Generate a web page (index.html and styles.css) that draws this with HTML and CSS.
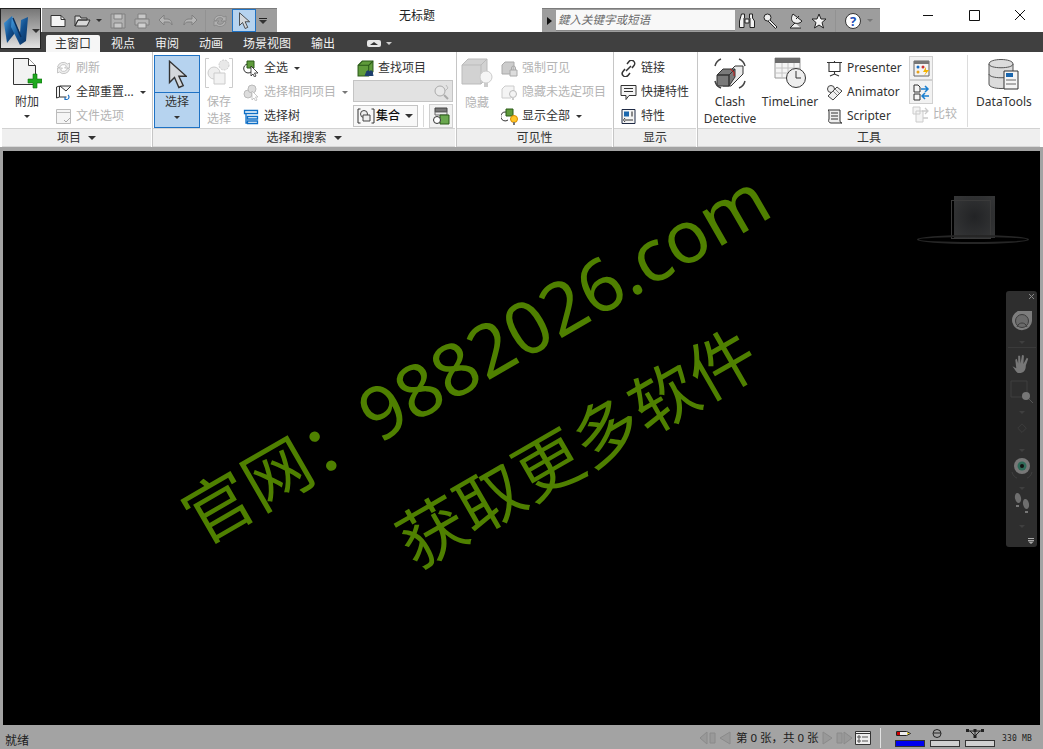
FILE: index.html
```html
<!DOCTYPE html>
<html lang="zh-CN">

<head>
	<meta charset="UTF-8">
	<title>无标题</title>
	<link rel="stylesheet" href="styles.css">
</head>

<body>
	<svg class="defs" width="0" height="0">
		<defs>
			<linearGradient id="logo" x1="0" y1="0" x2="1" y2="1"><stop offset="0" stop-color="#4aa3e6"/><stop offset=".55" stop-color="#12508f"/><stop offset="1" stop-color="#0a2f5c"/></linearGradient>
		</defs>
		<symbol id="cursor" viewBox="0 0 16 24"><path d="M2 1v17l4-4 3.500 8 3.500-1.500-3.500-7.500h6z" fill="#d4d8dc" stroke="#333" stroke-width="1.100"/></symbol>
		<symbol id="cube" viewBox="0 0 16 16"><path d="M1 5l4-4h10v10l-4 4H1z" fill="#5f9b3b" stroke="#2a5a18"/><path d="M1 5h10v10M11 5l4-4" fill="none" stroke="#2a5a18"/></symbol>
	</svg>

	<header class="titlebar">
		<div class="appbtn">
			<svg width="28" height="31" viewBox="0 0 28 31"><path d="M1 8l8-7 3 17-8 10z" fill="url(#logo)"/><path d="M9 1l8 17 1-13 7-3-2 24-6 4-9-18z" fill="url(#logo)"/><path d="M10 3l8 19" stroke="#0a2f5c" stroke-width="1.500"/></svg>
			<i class="caret dark"></i>
		</div>
		<div class="qat">
			<svg class="q" width="16" height="16" viewBox="0 0 16 16"><path d="M1 2.500h10l4 4v7H1z" fill="#f4f4f4" stroke="#333"/><path d="M11 2.500v4h4" fill="none" stroke="#333"/></svg>
			<svg class="q open" width="17" height="16" viewBox="0 0 17 16"><path d="M1 3h5l1 2h6v2H4l-3 6zM1 13l3-6h12l-3 6z" fill="#d8d8d8" stroke="#333"/></svg>
			<i class="caret dark sm"></i>
			<svg class="q" width="16" height="16" viewBox="0 0 16 16"><path d="M1 1h14v14H1z" fill="#b0b0b0" stroke="#808080"/><path d="M4 1h8v5H4zM4 10h8v5H4z" fill="#c8c8c8" stroke="#808080"/></svg>
			<svg class="q" width="16" height="16" viewBox="0 0 16 16"><path d="M4 1h8v5H4z" fill="#c8c8c8" stroke="#808080"/><path d="M1 6h14v6H1z" fill="#b5b5b5" stroke="#808080"/><path d="M4 10h8v5H4z" fill="#d0d0d0" stroke="#808080"/></svg>
			<svg class="q" width="16" height="14" viewBox="0 0 16 14"><path d="M6 1L1 6l5 5V8h4c2 0 3 1 4 3 0-4-2-6-5-6H6z" fill="#b5b5b5" stroke="#808080"/></svg>
			<svg width="16" height="14" viewBox="0 0 16 14"><path d="M10 1l5 5-5 5V8H6c-2 0-3 1-4 3 0-4 2-6 5-6h3z" fill="#b5b5b5" stroke="#808080"/></svg>
			<i class="qsep"></i>
			<svg class="sync" width="16" height="16" viewBox="0 0 16 16"><path d="M2 7a6 6 0 0 1 10-3l2-1v5H9l2-2a4 4 0 0 0-7 2zM14 9a6 6 0 0 1-10 3l-2 1V8h5l-2 2a4 4 0 0 0 7-2z" fill="#b0b0b0" stroke="#858585" stroke-width=".8"/></svg>
			<div class="qcursor"><svg width="12" height="18"><use href="#cursor"/></svg></div>
			<div class="qmore"><i></i><i class="caret dark"></i></div>
		</div>
		<div class="doctitle">无标题</div>
		<div class="searchstrip">
			<div class="searchtoggle"><i class="arrowright"></i></div>
			<div class="searchinput">鍵入关键字或短语</div>
			<svg class="s" width="16" height="16" viewBox="0 0 16 16"><path d="M2.500 1h3v4h-.5v9.500H.5V8zM10.500 1h3v4l2 3v6.500H11V5h-.5zM6 6h4v4H6z" fill="#f2f2f2" stroke="#222"/></svg>
			<svg class="s" width="16" height="16" viewBox="0 0 16 16"><circle cx="4.500" cy="4.500" r="3.500" fill="#eee" stroke="#222"/><path d="M7 7l7 7-1.500 1.500L5 8" fill="#eee" stroke="#222"/></svg>
			<svg class="s" width="16" height="16" viewBox="0 0 16 16"><path d="M6 1l9 7c-2 3-7 3-9 1s-2-5 0-8zM8 10l-5 5h11M9 6l3-3" fill="#eee" stroke="#222"/></svg>
			<svg class="s last" width="16" height="16" viewBox="0 0 16 16"><path d="M8 1l2 5h5l-4 3.500 1.500 5.500L8 12l-4.500 3L5 9.500 1 6h5z" fill="#f4f4f4" stroke="#222"/></svg>
			<i class="qsep"></i>
			<div class="helpicon">?</div>
			<i class="caret grey sm"></i>
		</div>
		<div class="winctl">
			<svg width="46" height="32"><path d="M18 15.500h10" stroke="#111"/></svg>
			<svg width="46" height="32"><path d="M18.500 10.500h10v10h-10z" fill="none" stroke="#111"/></svg>
			<svg width="46" height="32"><path d="M18 10l10 10M28 10L18 20" stroke="#111"/></svg>
		</div>
	</header>

	<nav class="tabs">
		<span class="tab active">主窗口</span>
		<span class="tab">视点</span>
		<span class="tab">审阅</span>
		<span class="tab">动画</span>
		<span class="tab">场景视图</span>
		<span class="tab">输出</span>
		<span class="tabmin"><i class="pill"></i><i class="caret light sm"></i></span>
	</nav>

	<section class="ribbon">
		<div class="panel p-project">
			<div class="panel-body">
				<div class="big add">
					<svg width="30" height="32" viewBox="0 0 30 32"><path d="M1.500 1.500h15l7 7v19h-22z" fill="#f2f2f2" stroke="#333"/><path d="M16.500 1.500v7h7" fill="#fff" stroke="#333"/><path d="M21 17h4v5h5v4h-5v5h-4v-5h-5v-4h5z" fill="#1ea81e" stroke="#0c6b0c" stroke-width=".6"/></svg>
					<span class="lbl">附加</span>
					<i class="caret dark sm"></i>
				</div>
				<div class="col c-proj">
					<div class="row off"><svg width="17" height="16" viewBox="0 0 16 16"><path d="M2 7a6 6 0 0 1 10-3l2-1v5H9l2-2a4 4 0 0 0-7 2zM14 9a6 6 0 0 1-10 3l-2 1V8h5l-2 2a4 4 0 0 0 7-2z" fill="#eee" stroke="#bbb" stroke-width=".8"/></svg><span>刷新</span></div>
					<div class="row"><svg width="17" height="17" viewBox="0 0 17 17"><path d="M1.500 3l3-1v11l-3 1zM5 2h11l-5 5zM4.500 13h7" fill="#f3f3f3" stroke="#333"/><path d="M13 11a2.500 2.500 0 0 1-3 4M10 13v2.500h2.500" fill="none" stroke="#1a6fc4" stroke-width="1.200"/></svg><span>全部重置...</span><i class="caret dark sm"></i></div>
					<div class="row off"><svg width="17" height="17" viewBox="0 0 17 17"><path d="M1.500 1.500h14v14h-14z" fill="#f5f5f5" stroke="#bbb"/><path d="M1.500 4.500h14" stroke="#bbb"/><path d="M9 12l2 2 4-4" fill="none" stroke="#aaa"/></svg><span>文件选项</span></div>
				</div>
			</div>
			<div class="panel-label">项目 <i class="caret dark"></i></div>
		</div>

		<div class="panel p-select">
			<div class="panel-body">
				<div class="selectbtn">
					<div class="selecttop"><svg width="20" height="30"><use href="#cursor"/></svg></div>
					<div class="selectbot"><span class="lbl">选择</span><i class="caret dark sm"></i></div>
				</div>
				<div class="big off savesel">
					<svg width="30" height="32" viewBox="0 0 30 32"><path d="M5 1.500H1.500v29H5M25 1.500h3.500v29H25" fill="none" stroke="#ccc"/><circle cx="10" cy="16" r="6" fill="#eee" stroke="#ccc"/><path d="M10 16h11v11H10z" fill="#f2f2f2" stroke="#ccc"/><circle cx="20" cy="8" r="5" fill="#e8e8e8" stroke="#ccc" stroke-dasharray="2 1"/></svg>
					<span class="lbl">保存<br>选择</span>
				</div>
				<div class="col c-sel">
					<div class="row"><svg width="17" height="17" viewBox="0 0 17 17"><path d="M5 4a4.500 4.500 0 1 0 3 8" fill="none" stroke="#333"/><path d="M4 1h7v7H4z" fill="#5f9b3b" stroke="#2a5a18"/><path d="M8 6v10l2-2 1.500 3 1.500-1-1.500-3H15z" fill="#fff" stroke="#222" stroke-width=".8"/></svg><span>全选</span><i class="caret dark sm"></i></div>
					<div class="row off"><svg width="17" height="17" viewBox="0 0 17 17"><circle cx="5" cy="10" r="4" fill="#ddd" stroke="#bbb"/><circle cx="9" cy="5" r="4" fill="#ddd" stroke="#bbb"/><path d="M9 7v9l2-2 1.500 3 1.500-1-1.500-3H15z" fill="#fff" stroke="#bbb" stroke-width=".8"/></svg><span>选择相同项目</span><i class="caret grey sm"></i></div>
					<div class="row"><svg width="17" height="17" viewBox="0 0 17 17"><path d="M1.500 2.500h13v3h-13zM4.500 8.500h10v2.500h-10zM4.500 13h10v2.500h-10zM3 5.500v9.500h1.500" fill="none" stroke="#0f6fc6" stroke-width="1.300"/></svg><span>选择树</span></div>
				</div>
				<div class="col c-find">
					<div class="row find"><svg width="17" height="17" viewBox="0 0 17 17"><use href="#cube"/><path d="M8 16l2-5h2l1 5M12 16l1-5h2l1 5" fill="#1d3f6e" stroke="#1d3f6e"/></svg><span>查找项目</span></div>
					<div class="findbox"><svg width="18" height="16" viewBox="0 0 18 16"><circle cx="7" cy="7" r="5" fill="#e8e8e8" stroke="#aaa"/><path d="M11 11l4 4" stroke="#aaa" stroke-width="2"/><path d="M13 1l2 3-3 3" fill="none" stroke="#bbb"/></svg></div>
					<div class="setrow">
						<div class="setselect"><svg width="18" height="16" viewBox="0 0 18 16"><path d="M3.500 1H1v14h2.500M14.500 1H17v14h-2.500" fill="none" stroke="#333"/><circle cx="7" cy="6" r="3.500" fill="#eee" stroke="#444"/><path d="M6 7h7v6H6z" fill="#eee" stroke="#444"/></svg><b>集合</b><i class="caret dark"></i></div>
						<i class="setsep"></i>
						<div class="squarebtn"><svg width="18" height="18" viewBox="0 0 18 18"><path d="M3 1h12v4H3z" fill="#777" stroke="#444"/><path d="M3 5h12v3H3z" fill="#eee" stroke="#666"/><path d="M8 8h9v9H8z" fill="#6aa84f" stroke="#2a5a18"/><circle cx="5" cy="13" r="3.500" fill="#fff" stroke="#333"/></svg></div>
					</div>
				</div>
			</div>
			<div class="panel-label">选择和搜索 <i class="caret dark"></i></div>
		</div>

		<div class="panel p-vis">
			<div class="panel-body">
				<div class="big off hide">
					<svg width="32" height="32" viewBox="0 0 32 32"><path d="M1 8l6-6h19v19l-6 6H1z" fill="#d2d2d2" stroke="#bbb"/><path d="M1 8h19v19M20 8l6-6" fill="none" stroke="#bbb"/><circle cx="25" cy="20" r="6" fill="#f5f5f5" stroke="#ccc"/><path d="M23 26h4v4h-4z" fill="#ccc"/></svg>
					<span class="lbl">隐藏</span>
				</div>
				<div class="col c-vis">
					<div class="row off"><svg width="17" height="17" viewBox="0 0 17 17"><path d="M1 5l3-3h9v9l-3 3H1z" fill="#ccc" stroke="#aaa"/><path d="M9 10h7v6H9z" fill="#ddd" stroke="#aaa"/><path d="M10.500 10V8a2 2 0 0 1 4 0v2" fill="none" stroke="#aaa"/></svg><span>强制可见</span></div>
					<div class="row off"><svg width="17" height="17" viewBox="0 0 17 17"><path d="M1 5l3-3h9v9l-3 3H1z" fill="#f4f4f4" stroke="#ccc"/><circle cx="12" cy="10" r="3.500" fill="#f4f4f4" stroke="#bbb"/><path d="M11 13h2v3h-2z" fill="#ccc"/></svg><span>隐藏未选定项目</span></div>
					<div class="row"><svg width="17" height="17" viewBox="0 0 17 17"><path d="M5 4a4.500 4.500 0 1 0 2 8" fill="none" stroke="#333"/><path d="M5 1h7v7H5z" fill="#5f9b3b" stroke="#2a5a18"/><circle cx="13" cy="11" r="3.500" fill="#ffc629" stroke="#d58a00"/><path d="M12 14h2v3h-2z" fill="#777"/></svg><span>显示全部</span><i class="caret dark sm"></i></div>
				</div>
			</div>
			<div class="panel-label">可见性</div>
		</div>

		<div class="panel p-show">
			<div class="panel-body">
				<div class="col c-show">
					<div class="row"><svg width="17" height="17" viewBox="0 0 17 17"><path d="M7 4l2-2.500a3 3 0 0 1 5 4L12 8M10 13l-2 2.500a3 3 0 0 1-5-4L5 9M6 11l5-5" fill="none" stroke="#333" stroke-width="1.500"/></svg><span>链接</span></div>
					<div class="row"><svg width="17" height="17" viewBox="0 0 17 17"><path d="M1 1.500h15v10H9l-3 4v-4H1z" fill="#f5f5f5" stroke="#333"/><path d="M4 4.500h9M4 7.500h9" stroke="#333"/></svg><span>快捷特性</span></div>
					<div class="row"><svg width="17" height="17" viewBox="0 0 17 17"><path d="M2 1.500h13v14H2z" fill="#f4f4f4" stroke="#1f2a44"/><path d="M4 3.500h5v5H4z" fill="#1a66ad"/><path d="M11 3.500h2v5h-2z" fill="#888"/><path d="M5 12h8M5 10l-1.500 2L5 14" fill="none" stroke="#333"/></svg><span>特性</span></div>
				</div>
			</div>
			<div class="panel-label">显示</div>
		</div>

		<div class="panel p-tools">
			<div class="panel-body">
				<div class="big clash">
					<svg width="34" height="34" viewBox="0 0 34 34"><path d="M10 22l12-12h8v8L18 30h-8z" fill="#e9e9e9" stroke="#333"/><path d="M4 19h12v11H4zM4 19l6-6h12l-6 6zM16 19l6-6v8l-6 9z" fill="#7a7a7a" stroke="#333"/><path d="M17 13l4 3v4" fill="none" stroke="#c21818"/><path d="M2 10a10 10 0 0 1 6-7M32 10a10 10 0 0 0-6-7M2 25a10 10 0 0 0 6 7M32 25a10 10 0 0 1-6 7" fill="none" stroke="#444" stroke-width="1.500"/></svg>
					<span class="lbl">Clash<br>Detective</span>
				</div>
				<div class="big timeliner">
					<svg width="32" height="32" viewBox="0 0 32 32"><path d="M1 1h25v20H1z" fill="#f5f5f5" stroke="#999"/><path d="M1 1h25v5H1z" fill="#6b6b6b"/><path d="M1 11h25M1 16h25M8 6v15M14 6v15M20 6v15" stroke="#c4c4c4"/><circle cx="22" cy="21" r="9.500" fill="#eee" stroke="#333"/><path d="M22 14v7h5" fill="none" stroke="#333"/></svg>
					<span class="lbl">TimeLiner</span>
				</div>
				<div class="col c-tools">
					<div class="row"><svg width="17" height="17" viewBox="0 0 17 17"><path d="M1 2.500h15M3 2.500v9h11v-9M8.500 1v1.500M8.500 11.500V14M4 16l4.500-2 4.500 2" fill="#fff" stroke="#333" stroke-width="1.100"/></svg><span>Presenter</span></div>
					<div class="row"><svg width="17" height="17" viewBox="0 0 17 17"><circle cx="5" cy="5" r="3.500" fill="#eee" stroke="#444"/><path d="M2 12l9-9 5 4-9 9z" fill="#f0f0f0" stroke="#444"/><path d="M7 7l4 4M9 5l4 4" stroke="#888"/></svg><span>Animator</span></div>
					<div class="row"><svg width="17" height="17" viewBox="0 0 17 17"><path d="M2 2h12v11a2 2 0 0 0 2 2H5c-2 0-3-2-2-4V4a2 2 0 0 0-1-2z" fill="#eee" stroke="#333"/><path d="M5 5h7M5 8h7M5 11h7" stroke="#333"/></svg><span>Scripter</span></div>
				</div>
				<div class="col c-side">
					<div class="squarebtn"><svg width="17" height="17" viewBox="0 0 17 17"><path d="M1 1h15v15H1z" fill="#f4f4f4" stroke="#666"/><path d="M1 1h15v3H1z" fill="#777"/><circle cx="5" cy="7" r="1.500" fill="#1a6fc4"/><circle cx="10" cy="7" r="1.500" fill="#c33"/><circle cx="5" cy="12" r="1.500" fill="#e8a21a"/><path d="M13 7l-3 5h3l-2 4 5-6h-3z" fill="#f5b400"/></svg></div>
					<div class="squarebtn"><svg width="17" height="17" viewBox="0 0 17 17"><path d="M1 1h4l2 2v5H1zM1 10h6v6H1z" fill="#f5f5f5" stroke="#333"/><path d="M8 5h7M12 2l3 3-3 3M16 12H9M12 9l-3 3 3 3" fill="none" stroke="#1a7fd0" stroke-width="1.500"/></svg></div>
					<div class="row off compare"><svg width="17" height="17" viewBox="0 0 17 17"><path d="M1 1h7v7H1zM4 5h7v11H4z" fill="#f4f4f4" stroke="#ccc"/><path d="M10 5h6M13 2l3 3-3 3M16 12h-5" fill="none" stroke="#ccc" stroke-width="1.300"/></svg><span>比较</span></div>
				</div>
				<i class="toolsep"></i>
				<div class="big datatools">
					<svg width="32" height="32" viewBox="0 0 32 32"><path d="M1 6c0-6 24-6 24 0v20c0 6-24 6-24 0z" fill="#dcdcdc" stroke="#555"/><path d="M1 6c0 5 24 5 24 0M1 16c0 5 24 5 24 0" fill="none" stroke="#555"/><path d="M16 13h14v18H16z" fill="#f5f5f5" stroke="#333"/><path d="M18 15h7v4h-7z" fill="#1a66ad"/><path d="M18 22h10M18 26h10" stroke="#666"/></svg>
					<span class="lbl">DataTools</span>
				</div>
			</div>
			<div class="panel-label">工具</div>
		</div>
	</section>

	<main class="viewport">
		<div class="mark mark1">官网：<span class="latin">9882026.com</span></div>
		<div class="mark mark2">获取更多软件</div>

		<div class="viewcube">
			<div class="cubeback"></div>
			<div class="cubefront"></div>
			<div class="cubering"></div>
		</div>

		<aside class="navbar">
			<svg class="navclose" width="7" height="7"><path d="M1 1l5 5M6 1L1 6" stroke="#888"/></svg>
			<svg class="wheel" width="20" height="20" viewBox="0 0 20 20"><path d="M6 0h14v10a10 10 0 1 1-14-10z" fill="#7d7d7d"/><circle cx="10" cy="10" r="6.500" fill="#6b6b6b" stroke="#3c3c3c"/><path d="M5 16c1-3 3-4 5-4s4 1 5 4" fill="none" stroke="#3c3c3c"/></svg>
			<i class="navcaret"></i>
			<i class="navline"></i>
			<svg class="hand" width="22" height="21" viewBox="0 0 22 22"><path d="M1 14l4 2-1-9 1.500-1L7 11V3l2 0 .5 8L11 2l2 .5-.5 9L16 5l1.500 1L15 13c0 5-2 8-7 8-3 0-4-3-7-7z" fill="#777"/></svg>
			<svg class="zoomnav" width="24" height="24" viewBox="0 0 24 24"><path d="M1 1h16v16H1z" fill="none" stroke="#3f3f3f"/><circle cx="16" cy="16" r="4" fill="#777"/><path d="M19 19l4 4" stroke="#555"/></svg>
			<i class="navcaret"></i>
			<svg class="orbit" width="14" height="12" viewBox="0 0 14 14"><path d="M7 1l5 5-5 5-5-5z" fill="none" stroke="#3f3f3f"/></svg>
			<i class="navcaret"></i>
			<svg class="eye" width="24" height="22" viewBox="0 0 24 22"><circle cx="12" cy="8" r="8" fill="#777"/><circle cx="12" cy="8" r="4.500" fill="#2e6a58"/><circle cx="12" cy="8" r="2" fill="#111"/><path d="M2 14c1 4 4 6 5 6M22 14c-1 4-4 6-5 6" fill="none" stroke="#3f3f3f"/></svg>
			<i class="navcaret"></i>
			<svg class="steps" width="20" height="22" viewBox="0 0 20 22"><ellipse cx="6" cy="5" rx="3" ry="5" fill="#6e6e6e" transform="rotate(-12 6 5)"/><path d="M4 12h3v2H4z" fill="#777"/><ellipse cx="14" cy="11" rx="3" ry="5" fill="#6e6e6e" transform="rotate(-12 14 11)"/><path d="M13 18h3v2h-3z" fill="#777"/></svg>
			<i class="navcaret"></i>
			<svg class="navmenu" width="6" height="6"><path d="M0 .5h6M0 2.500h6" stroke="#aaa"/><path d="M0 3.500h6L3 6z" fill="#aaa"/></svg>
		</aside>
	</main>

	<footer class="statusbar">
		<span class="ready">就绪</span>
		<div class="pager">
			<svg width="33" height="16" viewBox="0 0 33 16"><path d="M8 2L1 8l7 6zM11 3h5v10h-5zM31 2l-10 6 10 6z" fill="#999" stroke="#8a8a8a"/></svg>
			<span class="pagetext">第 0 张，共 0 张</span>
			<svg width="30" height="16" viewBox="0 0 30 16"><path d="M1 2l9 6-9 6zM15 3h5v10h-5zM22 2l8 6-8 6z" fill="#999" stroke="#8a8a8a"/></svg>
			<svg class="sheets" width="16" height="14" viewBox="0 0 16 14"><path d="M.5.500h15v13H.500z" fill="#eee" stroke="#333"/><path d="M.5 2.500h15" stroke="#333"/><path d="M3 5h2v2H3zM3 9h2v2H3zM7 6h6M7 10h6" fill="none" stroke="#555"/></svg>
		</div>
		<i class="statussep"></i>
		<div class="meter">
			<svg width="16" height="7" viewBox="0 0 16 7"><path d="M.5 1.500h10l4 2-4 2H.500z" fill="#eee" stroke="#222"/><path d="M1 2h3v3H1z" fill="#c00"/><path d="M11 2.500l3 1-3 1z" fill="#e8d22a"/></svg>
			<i class="bar blue"></i>
		</div>
		<div class="meter">
			<svg width="12" height="9" viewBox="0 0 12 9"><circle cx="6" cy="4.500" r="4" fill="none" stroke="#222"/><path d="M2 4h8" stroke="#222"/></svg>
			<i class="bar"></i>
		</div>
		<div class="meter">
			<svg width="18" height="9" viewBox="0 0 18 9"><path d="M1 2h16M9 2v5M4 2l5 5M14 2L9 7" stroke="#222" fill="none"/><path d="M0 0h3v3H0zM7.500 0h3v3h-3zM15 0h3v3h-3zM7.500 6h3v3h-3z" fill="#222"/></svg>
			<i class="bar"></i>
		</div>
		<span class="mem">330 MB</span>
	</footer>
</body>

</html>
```
FILE: styles.css
```css
* {
	box-sizing: border-box;
}

html,
body {
	margin: 0;
	height: 100%;
}

body {
	width: 1043px;
	height: 749px;
	overflow: hidden;
	display: flex;
	flex-direction: column;
	background-color: #a3a3a3;
	color: #333;
	font-family: "Noto Sans", "Noto Sans CJK SC", sans-serif;
	font-size: 12px;
	line-height: 16px;
}

.defs {
	position: absolute;
}

svg {
	display: block;
	flex: none;
}

/* little triangles */
.caret {
	display: block;
	flex: none;
	width: 0;
	height: 0;
	border-style: solid;
	border-color: #333 transparent transparent;
	border-width: 4px 4px 0;
}

.caret.sm {
	border-width: 3px 3px 0;
}

.caret.grey {
	border-top-color: #777;
}

.caret.light {
	border-top-color: #ccc;
}

/* title bar */
.titlebar {
	flex: none;
	height: 32px;
	display: flex;
	background-color: #fff;
}

.appbtn {
	position: absolute;
	left: 0;
	top: 8px;
	width: 41px;
	height: 41px;
	padding: 4px 0 0 2px;
	display: flex;
	gap: 1px;
	align-items: center;
	background: linear-gradient(#777, #a8a8a8 50%, #e2e2e2);
	border: 1px solid #222;
}

.qat {
	margin: 8px 0 0 42px;
	width: 235px;
	height: 24px;
	padding-left: 8px;
	display: flex;
	align-items: center;
	background-color: #9d9d9d;
	border-top: 1px solid #7c7c7c;
}

.q {
	margin-right: 8px;
}

.qat .open {
	margin-right: 5px;
}

.qat .caret {
	margin-right: 8px;
}

.qsep {
	flex: none;
	width: 1px;
	height: 22px;
	margin: 0 9px 0 8px;
	background-color: #929292;
}

.sync {
	margin-right: 4px;
	margin-left: 2px;
}

.qat .qsep {
	margin: 0 4px 0 7px;
}

.qcursor {
	flex: none;
	width: 24px;
	height: 23px;
	display: flex;
	align-items: center;
	justify-content: center;
	background-color: #b6d3ef;
	border: 1px solid #1f72c4;
}

.qmore {
	margin-left: 0;
	width: 14px;
	display: flex;
	flex-direction: column;
	gap: 1px;
	align-items: center;
}

.qmore .caret {
	margin-right: 0;
}

.qmore i:first-child {
	width: 8px;
	height: 1px;
	background-color: #222;
}

.doctitle {
	width: 265px;
	padding: 8px 0 0 15px;
	text-align: center;
	color: #222;
}

.searchstrip {
	margin-top: 8px;
	width: 338px;
	height: 24px;
	display: flex;
	align-items: center;
	background-color: #9d9d9d;
	border-top: 1px solid #7c7c7c;
}

.searchtoggle {
	width: 14px;
	display: flex;
	justify-content: center;
}

.arrowright {
	width: 0;
	height: 0;
	border-style: solid;
	border-color: transparent transparent transparent #111;
	border-width: 4px 0 4px 5px;
}

.searchinput {
	width: 179px;
	height: 21px;
	margin-right: 4px;
	padding: 2px 2px;
	background-color: #f8f8f8;
	border: 1px solid #888;
	border-width: 0 0 1px 0;
	font-style: italic;
	color: #6a6a6a;
	font-size: 11.500px;
}

.s {
	margin-right: 8px;
}

.s.last {
	margin-right: 0;
}

.helpicon {
	flex: none;
	width: 16px;
	height: 16px;
	border-radius: 50%;
	background-color: #fff;
	border: 1px solid #333;
	color: #1c4fb8;
	font-size: 13px;
	font-weight: 700;
	line-height: 14px;
	text-align: center;
	margin-right: 6px;
}

.winctl {
	margin-left: auto;
	display: flex;
}

/* tabs */
.tabs {
	flex: none;
	height: 20px;
	padding-left: 46px;
	display: flex;
	align-items: flex-end;
	background-color: #404040;
	color: #f2f2f2;
}

.tab {
	height: 17px;
	padding: 0 9px;
	margin-right: 2px;
	line-height: 17px;
}

.tab.active {
	width: 54px;
	background-color: #f6f6f6;
	color: #333;
	border-radius: 2px 2px 0 0;
}

.tabmin {
	margin-left: 21px;
	height: 17px;
	display: flex;
	gap: 5px;
	align-items: center;
}

.pill {
	width: 14px;
	height: 7px;
	padding: 2px 0 0 3px;
	border-radius: 2px;
	background-color: #e6e6e6;
}

.pill::after {
	content: "";
	display: block;
	width: 0;
	height: 0;
	border-style: solid;
	border-color: transparent transparent #333;
	border-width: 0 4px 3px;
}

/* ribbon */
.ribbon {
	flex: none;
	height: 95px;
	padding: 0 3px 0 2px;
	display: flex;
	gap: 2px;
	background-color: #fff;
}

.panel {
	display: flex;
	flex-direction: column;
}

.p-project {
	width: 149px;
}

.p-select {
	width: 302px;
}

.p-vis {
	width: 155px;
}

.p-show {
	width: 82px;
}

.p-tools {
	width: 342px;
}

.panel-body {
	flex: none;
	height: 76px;
	display: flex;
}

.panel-label {
	flex: none;
	height: 19px;
	display: flex;
	gap: 7px;
	align-items: center;
	justify-content: center;
	background-color: #efefef;
	border-top: 1px solid #d2d2d2;
	border-bottom: 1px solid #d8d8d8;
}

.ribbon .panel + .panel {
	box-shadow: -1px 0 0 #c6c6c6;
}

.big {
	display: flex;
	flex-direction: column;
	align-items: center;
	text-align: center;
}

.lbl {
	display: block;
	line-height: 17px;
}

.off {
	color: #b4b4b4;
}

.col {
	padding-top: 4px;
	display: flex;
	flex-direction: column;
}

.row {
	height: 24px;
	display: flex;
	align-items: center;
	white-space: nowrap;
}

.row svg {
	margin-right: 4px;
}

.row .caret {
	margin-left: 6px;
}

.add {
	width: 50px;
	padding-top: 5px;
	margin-right: 3px;
}

.add .lbl {
	margin-top: 4px;
}

.add .caret {
	margin-top: 5px;
}

.selectbtn {
	width: 46px;
	height: 73px;
	margin: 3px 4px 0 1px;
	display: flex;
	flex-direction: column;
	background-color: #b6d3ef;
	border: 1px solid #1f72c4;
}

.selecttop {
	flex: none;
	height: 37px;
	display: flex;
	justify-content: center;
	padding-top: 4px;
	border-bottom: 1px solid #1f72c4;
}

.selectbot {
	flex: 1;
	display: flex;
	flex-direction: column;
	align-items: center;
}

.selectbot .caret {
	margin-top: 6px;
}

.savesel {
	width: 30px;
	margin-right: 9px;
	padding-top: 5px;
}

.savesel .lbl {
	margin-top: 4px;
}

.c-sel {
	width: 110px;
}

.find {
	padding-left: 4px;
}

.findbox {
	width: 100px;
	height: 22px;
	padding: 3px 1px 0 0;
	display: flex;
	justify-content: flex-end;
	background-color: #e2e2e2;
	border: 1px solid #c4c4c4;
}

.setrow {
	margin-top: 2px;
	display: flex;
	align-items: center;
}

.setselect {
	width: 65px;
	height: 22px;
	padding: 0 4px 0 3px;
	display: flex;
	align-items: center;
	background-color: #f8f8f8;
	border: 1px solid #c4c4c4;
	color: #111;
}

.setselect b {
	flex: 1;
	padding-left: 1px;
	font-weight: 500;
}

.setsep {
	width: 1px;
	height: 22px;
	margin: 0 5px;
	background-color: #d8d8d8;
}

.squarebtn {
	flex: none;
	width: 24px;
	height: 24px;
	display: flex;
	align-items: center;
	justify-content: center;
	background-color: #f2f2f2;
	border: 1px solid #d0d0d0;
}

.hide {
	width: 40px;
	padding-top: 5px;
	margin-right: 4px;
}

.hide .lbl {
	margin-top: 5px;
}

.c-show {
	padding-left: 6px;
}

.clash {
	width: 64px;
	padding-top: 4px;
}

.clash .lbl {
	margin-top: 3px;
}

.timeliner {
	width: 60px;
	margin-left: -2px;
	padding-top: 5px;
}

.timeliner .lbl {
	margin-top: 4px;
}

.c-tools {
	width: 83px;
	margin-left: 6px;
}

.c-side {
	width: 58px;
	padding-top: 4px;
	gap: 0;
}

.compare {
	margin-top: -2px;
	padding-left: 3px;
}

.toolsep {
	width: 1px;
	height: 72px;
	margin: 3px 0 0 0;
	background-color: #dcdcdc;
}

.datatools {
	flex: 1;
	padding-top: 6px;
}

.datatools .lbl {
	margin-top: 3px;
}

/* black model view */
.viewport {
	flex: none;
	position: relative;
	height: 574px;
	margin: 4px 3px 0;
	background-color: #000;
	overflow: hidden;
}

.mark {
	position: absolute;
	white-space: nowrap;
	color: #4f8000;
	font-family: "Noto Sans CJK SC", "Noto Sans", sans-serif;
	font-size: 68px;
	line-height: 80px;
	font-weight: 400;
	transform-origin: 0 50%;
	transform: rotate(-30deg);
}

.latin {
	font-family: "Noto Sans", sans-serif;
	font-size: 73px;
	font-weight: 400;
}

.mark1 {
	left: 184px;
	top: 330px;
}

.mark2 {
	left: 398px;
	top: 354px;
	font-size: 67px;
}

.viewcube {
	position: absolute;
	left: 914px;
	top: 44px;
	width: 112px;
	height: 50px;
}

.cubeback {
	position: absolute;
	left: 37px;
	top: 1px;
	width: 41px;
	height: 42px;
	background: radial-gradient(#222325, #363738);
}

.cubefront {
	position: absolute;
	left: 34px;
	top: 5px;
	width: 40px;
	height: 39px;
	border: 1px solid #3a3a3a;
}

.cubering {
	position: absolute;
	left: 0;
	top: 40px;
	width: 112px;
	height: 9px;
	border-radius: 50%;
	border: 2px solid #262626;
}

.navbar {
	position: absolute;
	left: 1003px;
	top: 140px;
	width: 31px;
	height: 256px;
	padding-top: 20px;
	display: flex;
	flex-direction: column;
	align-items: center;
	background-color: #2e2e2e;
	border-radius: 3px;
}

.navclose {
	position: absolute;
	right: 2px;
	top: 2px;
}

.navmenu {
	position: absolute;
	right: 3px;
	bottom: 3px;
}

.navcaret {
	flex: none;
	width: 0;
	height: 0;
	border-style: solid;
	border-color: #3f3f3f transparent transparent;
	border-width: 3px 3px 0;
}

.wheel + .navcaret {
	margin: 10px 0 3px;
}

.zoomnav + .navcaret {
	margin-top: 7px;
}

.orbit + .navcaret {
	margin-top: 14px;
}

.eye + .navcaret {
	margin-top: 7px;
}

.steps + .navcaret {
	margin-top: 10px;
}

.navline {
	flex: none;
	width: 28px;
	height: 1px;
	background-color: #3a3a3a;
}

.hand {
	margin-top: 5px;
}

.zoomnav {
	margin-top: 6px;
}

.orbit {
	margin-top: 9px;
}

.eye {
	margin-top: 6px;
}

.steps {
	margin-top: 3px;
}

/* status bar */
.statusbar {
	flex: none;
	height: 24px;
	padding: 2px 0 0 5px;
	display: flex;
	align-items: center;
	background-color: #a3a3a3;
	color: #1c1c1c;
}

.ready {
	padding-top: 5px;
}

.pager {
	margin-left: auto;
	display: flex;
	gap: 2px;
	align-items: center;
}

.pagetext {
	margin: 0 4px 0 2px;
	width: 80px;
	font-size: 11.500px;
	white-space: nowrap;
}

.sheets {
	margin-left: 1px;
}

.statussep {
	width: 1px;
	height: 20px;
	margin: 0 14px 0 9px;
	background-color: #e2e2e2;
}

.meter {
	width: 30px;
	margin-right: 5px;
	display: flex;
	flex-direction: column;
	gap: 2px;
	align-items: flex-start;
}

.meter svg {
	height: 9px;
	margin-left: 1px;
}

.bar {
	width: 30px;
	height: 7px;
	background-color: #d0d0d0;
	border: 1px solid #333;
}

.bar.blue {
	background-color: #0000f0;
}

.mem {
	width: 30px;
	margin: 2px 11px 0 2px;
	font-family: "DejaVu Sans Mono", monospace;
	font-size: 8px;
	letter-spacing: .2px;
	white-space: nowrap;
}
```
